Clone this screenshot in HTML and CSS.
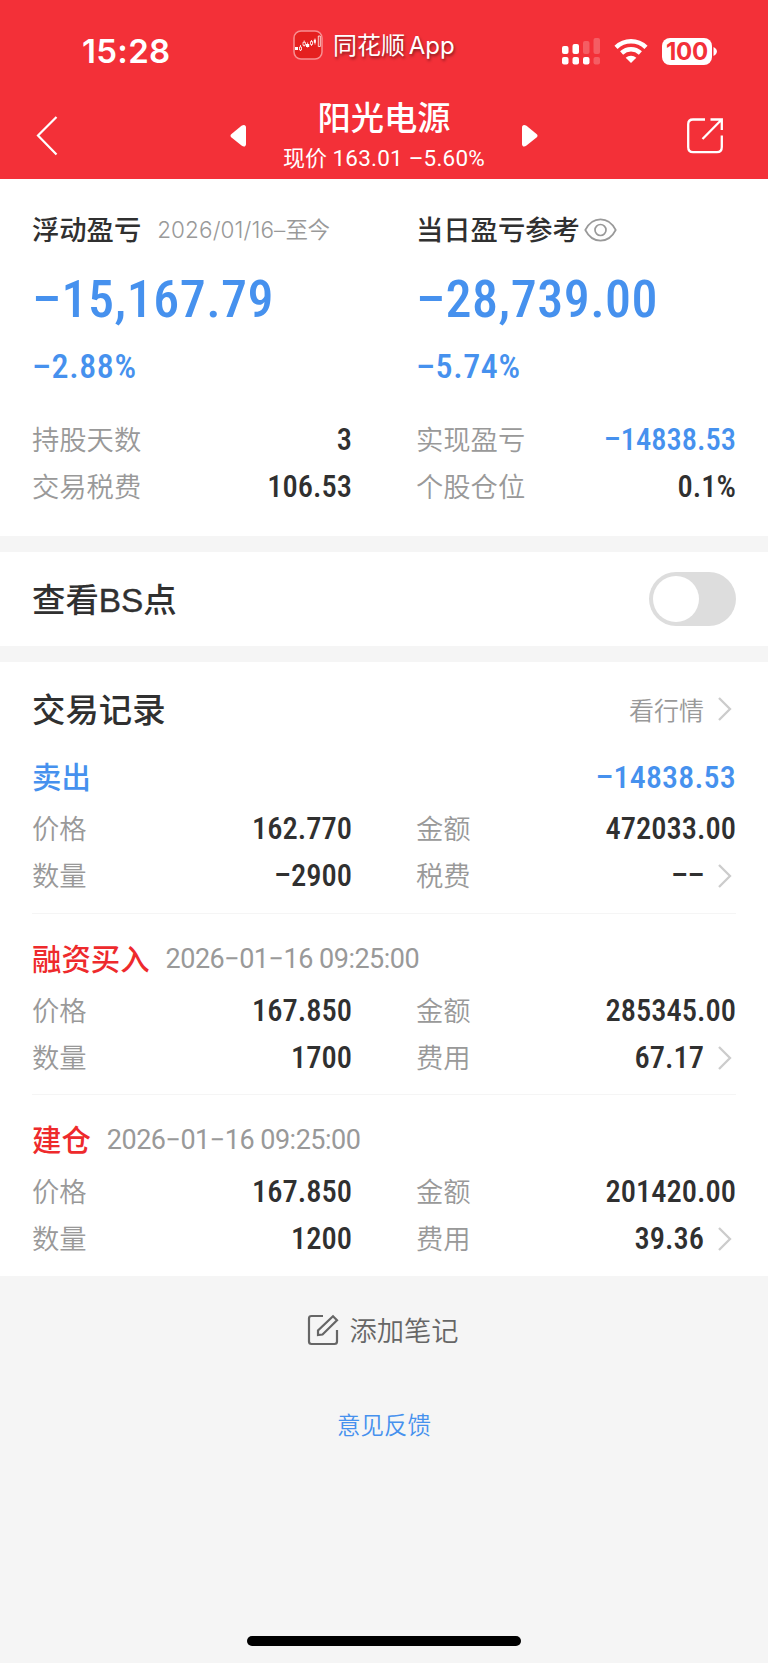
FILE: index.html
```
<!DOCTYPE html>
<html lang="zh-CN">
<head>
	<meta charset="utf-8">
	<title>阳光电源</title>
	<link rel="stylesheet" href="styles.css">
</head>
<body>
	<header class="header">
		<div class="status">
			<div class="time">15:28</div>
			<div class="app">
				<svg class="logo" width="30" height="30" viewBox="0 0 30 30">
					<rect x="1" y="1" width="28" height="28" rx="7" fill="#e5201f" stroke="#f88f91" stroke-width="1.5"/>
					<path d="M2 18.500h3M13 15.500h3.200M20.800 11.200h2" stroke="#fff" stroke-width="3"/>
					<path d="M7.500 15v6M11.200 10.500v6M18.500 10v6M22 8.500v6M14.600 12.500v5" stroke="#fff" stroke-width=".8"/>
					<path d="M6.500 17h2v3h-2zM10 12.300h2.400v3h-2.400zM17.500 11.500h2v3h-2zM25.300 6h2v10.500h-2z" fill="#e5201f" stroke="#fff" stroke-width=".8"/>
				</svg>
				<span>同花顺 App</span>
			</div>
			<div class="signals">
				<svg width="40" height="28" viewBox="0 0 40 28" fill="#fff">
					<rect x="0" y="9" width="6.500" height="8" rx="2"/>
					<rect x="10.500" y="7" width="6.500" height="10" rx="2"/>
					<rect x="21" y="4" width="6.500" height="13" rx="2" opacity=".22"/>
					<rect x="31.500" y="1" width="6.500" height="16" rx="2" opacity=".22"/>
					<rect x="0" y="20" width="6.500" height="7.500" rx="2"/>
					<rect x="10.500" y="20" width="6.500" height="7.500" rx="2"/>
					<rect x="21" y="20" width="6.500" height="7.500" rx="2"/>
					<rect x="31.500" y="20" width="6.500" height="7.500" rx="2" opacity=".22"/>
				</svg>
				<svg class="wifi" width="34" height="26" viewBox="0 0 34 26" fill="none" stroke="#fff">
					<path d="M2 9.300C10.500 1.200 23.500 1.200 32 9.300" stroke-width="4.500"/>
					<path d="M7.600 15C13 10 21 10 26.400 15" stroke-width="4.500"/>
					<path d="M17 25l-5.300-5.300c3-2.700 7.600-2.700 10.600 0z" fill="#fff" stroke="none"/>
				</svg>
				<div class="battery">100</div>
				<svg width="4" height="9" viewBox="0 0 4 9"><path d="M.5 0C5 2 5 7 .5 9z" fill="#fff"/></svg>
			</div>
		</div>
		<nav class="nav">
			<svg class="back" width="22" height="40" viewBox="0 0 22 40"><path d="M20.500 1L2 19.500 20.500 38.500" fill="none" stroke="#fff" stroke-width="2.200"/></svg>
			<svg class="prev" width="17" height="24" viewBox="0 0 17 24"><path d="M1.500 10L11.500 1.800C14 0 16 1 16 3.500V20C16 22.500 14 23.500 11.500 21.500L1.500 13.500Q-.5 11.700 1.500 10z" fill="#fff"/></svg>
			<div class="stock">
				<div class="name">阳光电源</div>
				<div class="price">现价 <span>163.01 –5.60%</span></div>
			</div>
			<svg class="next" width="17" height="24" viewBox="0 0 17 24"><path d="M15.500 10L5.500 1.800C3 0 1 1 1 3.500V20C1 22.500 3 23.500 5.500 21.500L15.500 13.500Q17.500 11.700 15.500 10z" fill="#fff"/></svg>
			<svg class="share" width="38" height="38" viewBox="0 0 38 38" fill="none" stroke="#fff" stroke-width="2.300">
				<path d="M19 2.500H7Q2.200 2.500 2.200 7.300V30Q2.200 35.200 7 35.200H31Q35.800 35.200 35.800 30V18.500"/>
				<path d="M24.500 2.500H35.800V13M35 3.200L16.500 22"/>
			</svg>
		</nav>
	</header>

	<section class="summary">
		<div class="col">
			<div class="title">浮动盈亏<span class="range">2026/01/16–<b>至今</b></span></div>
			<div class="big">–15,167.79</div>
			<div class="pct">–2.88%</div>
			<div class="row"><span class="label">持股天数</span><span class="num">3</span></div>
			<div class="row"><span class="label">交易税费</span><span class="num">106.53</span></div>
		</div>
		<div class="col">
			<div class="title">当日盈亏参考
				<svg class="eye" width="33" height="24" viewBox="0 0 33 24" fill="none" stroke="#999" stroke-width="1.700">
					<path d="M1.300 12C8.500-2.200 24.500-2.200 31.700 12C24.500 26.200 8.500 26.200 1.300 12z"/>
					<circle cx="16.500" cy="12" r="5.500"/>
				</svg>
			</div>
			<div class="big">–28,739.00</div>
			<div class="pct">–5.74%</div>
			<div class="row"><span class="label">实现盈亏</span><span class="num blue">–14838.53</span></div>
			<div class="row"><span class="label">个股仓位</span><span class="num">0.1%</span></div>
		</div>
	</section>

	<section class="bs">
		<span class="heading">查看<span class="latin">BS</span>点</span>
		<div class="switch"></div>
	</section>

	<section class="records">
		<div class="recordsTop">
			<span class="heading">交易记录</span>
			<a class="more">看行情<svg class="arrow" width="15" height="26" viewBox="0 0 15 26"><path d="M2 2L13 13 2 24"/></svg></a>
		</div>

		<div class="record">
			<div class="head blue"><span class="kind">卖出</span><span class="profit">–14838.53</span></div>
			<div class="grid">
				<div class="row"><span class="label">价格</span><span class="num">162.770</span></div>
				<div class="row"><span class="label">金额</span><span class="num">472033.00</span></div>
				<div class="row"><span class="label">数量</span><span class="num">–2900</span></div>
				<div class="row"><span class="label">税费</span><span class="num dashes">––</span><svg class="arrow" width="15" height="26" viewBox="0 0 15 26"><path d="M2 2L13 13 2 24"/></svg></div>
			</div>
		</div>

		<div class="record">
			<div class="head red"><span class="kind">融资买入</span><span class="date">2026−01−16 09:25:00</span></div>
			<div class="grid">
				<div class="row"><span class="label">价格</span><span class="num">167.850</span></div>
				<div class="row"><span class="label">金额</span><span class="num">285345.00</span></div>
				<div class="row"><span class="label">数量</span><span class="num">1700</span></div>
				<div class="row"><span class="label">费用</span><span class="num">67.17</span><svg class="arrow" width="15" height="26" viewBox="0 0 15 26"><path d="M2 2L13 13 2 24"/></svg></div>
			</div>
		</div>

		<div class="record">
			<div class="head red"><span class="kind">建仓</span><span class="date">2026−01−16 09:25:00</span></div>
			<div class="grid">
				<div class="row"><span class="label">价格</span><span class="num">167.850</span></div>
				<div class="row"><span class="label">金额</span><span class="num">201420.00</span></div>
				<div class="row"><span class="label">数量</span><span class="num">1200</span></div>
				<div class="row"><span class="label">费用</span><span class="num">39.36</span><svg class="arrow" width="15" height="26" viewBox="0 0 15 26"><path d="M2 2L13 13 2 24"/></svg></div>
			</div>
		</div>
	</section>

	<footer class="footer">
		<div class="note">
			<svg width="32" height="32" viewBox="0 0 32 32" fill="none" stroke="#666" stroke-width="2.200">
				<path d="M16 2H4.500Q2 2 2 4.500V27.500Q2 30 4.500 30H27.500Q30 30 30 27.500V16"/>
				<path d="M11 21V16.500L26 2.200 30 6.200 15.500 20.500z"/>
			</svg>
			<span>添加笔记</span>
		</div>
		<a class="feedback">意见反馈</a>
		<div class="home"></div>
	</footer>
</body>
</html>
```
FILE: styles.css
```
* {
	box-sizing: border-box;
}

body {
	margin: 0;
	width: 768px;
	height: 1663px;
	display: flex;
	flex-direction: column;
	background: #f5f5f5;
	color: #303030;
	font-family: Roboto, "Noto Sans CJK SC", sans-serif;
	white-space: nowrap;
}

svg {
	display: block;
	flex: none;
}

section {
	background: #fff;
	padding: 0 32px;
}

.blue {
	color: #4691ee;
}

.red {
	color: #ee2a2c;
}

/* header */

.header {
	height: 179px;
	background: #f33038;
	color: #fff;
}

.status {
	height: 89px;
	display: flex;
}

.time {
	width: 293px;
	padding: 31px 0 0 82px;
	font: 600 33px/40px Inter, sans-serif;
	letter-spacing: .3px;
}

.app {
	display: flex;
	width: 269px;
	height: 30px;
	margin-top: 30px;
	align-items: center;
	font-family: Inter, "Noto Sans CJK SC", sans-serif;
	font-size: 24px;
	text-shadow: 1px 2px 3px rgba(0, 0, 0, .45);
}

.app span {
	padding-bottom: 4px;
	word-spacing: -3px;
}

.logo {
	margin-right: 10px;
}

.signals {
	display: flex;
	height: 28px;
	margin-top: 37px;
	align-items: center;
}

.wifi {
	margin: 0 14px 0 12px;
}

.battery {
	width: 50px;
	height: 27px;
	border-radius: 8px;
	background: #fff;
	color: #f33038;
	font: 700 24px/28px Inter, sans-serif;
	letter-spacing: -.2px;
	text-align: center;
	margin-right: 1px;
}

.nav {
	height: 90px;
	display: flex;
	align-items: flex-start;
}

.back {
	margin: 27px 0 0 36px;
}

.prev {
	margin: 35px 0 0 172px;
}

.stock {
	width: 274px;
	text-align: center;
}

.name {
	margin-top: 6px;
	font-size: 33.300px;
	font-weight: 500;
	line-height: 48px;
}

.price {
	font-size: 22px;
	font-weight: 400;
	line-height: 30px;
}

.price span {
	font-size: 22.500px;
	font-weight: 450;
	font-stretch: 95%;
	letter-spacing: .2px;
}

.next {
	margin-top: 35px;
}

.share {
	margin: 28px 0 0 148px;
}

/* summary */

.summary {
	height: 357px;
	display: grid;
	grid-template-columns: 320px 320px;
	column-gap: 64px;
	padding-top: 28px;
}

.title {
	height: 42px;
	display: flex;
	align-items: center;
	margin-bottom: 2px;
	font-size: 27.300px;
	font-weight: 500;
}

.range {
	margin-left: 16px;
	color: #999;
	font: 300 22.500px Inter, "Noto Sans CJK SC", sans-serif;
	letter-spacing: .1px;
}

.range b {
	font-weight: 350;
	letter-spacing: -.5px;
}

.eye {
	margin: 4px 0 0 4px;
}

.big,
.pct,
.num,
.profit {
	font-stretch: 87%;
	font-weight: 460;
}

.big {
	height: 96px;
	color: #4691ee;
	font-size: 52px;
	line-height: 98px;
	letter-spacing: .5px;
}

.pct {
	height: 38px;
	margin-bottom: 31px;
	color: #4691ee;
	font-size: 34px;
	line-height: 38px;
	letter-spacing: .6px;
}

.row {
	height: 47px;
	display: flex;
	align-items: center;
}

.label {
	padding-bottom: 3px;
	color: #999;
	font-size: 27.300px;
	font-weight: 350;
}

.num {
	margin-left: auto;
	font-size: 30.500px;
}

.dashes {
	letter-spacing: -.5px;
}

/* BS switch */

.bs {
	height: 94px;
	margin: 16px 0;
	display: flex;
	align-items: center;
	justify-content: space-between;
}

.heading {
	padding-bottom: 4px;
	font-size: 33.400px;
	font-weight: 500;
}

.latin {
	font-family: "Liberation Sans", sans-serif;
	font-weight: 400;
	-webkit-text-stroke: .4px #303030;
}

.switch {
	width: 87px;
	height: 54px;
	padding: 4px;
	border-radius: 27px;
	background: #ddd;
}

.switch::before {
	content: "";
	display: block;
	width: 46px;
	height: 46px;
	border-radius: 50%;
	background: #fff;
}

/* trade records */

.records {
	height: 614px;
}

.recordsTop {
	height: 71px;
	padding-top: 23px;
	display: flex;
	align-items: center;
	justify-content: space-between;
}

.more {
	display: flex;
	align-items: center;
	color: #999;
	font-size: 25px;
	font-weight: 350;
}

.arrow {
	margin: 0 4px 0 13px;
	fill: none;
	stroke: #ccc;
	stroke-width: 2.300;
}

.record {
	height: 180px;
	padding-top: 19px;
}

.record + .record {
	height: 181px;
	padding-top: 20px;
	border-top: 1px solid #f5f5f5;
}

.head {
	height: 50px;
	margin-bottom: 3px;
	display: flex;
	align-items: center;
}

.kind {
	padding-bottom: 4px;
	font-size: 29.400px;
	font-weight: 500;
}

.profit {
	margin-left: auto;
	font-size: 32px;
	letter-spacing: .2px;
}

.date {
	margin-left: 16px;
	color: #999;
	font-size: 27px;
	letter-spacing: -.5px;
}

.grid {
	display: grid;
	grid-template-columns: 320px 320px;
	column-gap: 64px;
}

/* footer */

.footer {
	flex: 1;
	display: flex;
	flex-direction: column;
	align-items: center;
}

.note {
	height: 40px;
	margin: 34px 2px 0 0;
	display: flex;
	align-items: center;
	gap: 10px;
	color: #666;
	font-size: 27.300px;
	font-weight: 350;
}

.note span {
	padding-bottom: 2px;
}

.feedback {
	margin-top: 56px;
	color: #4691ee;
	font-size: 23.500px;
	font-weight: 350;
	line-height: 40px;
}

.home {
	width: 274px;
	height: 10px;
	margin: auto 0 17px;
	border-radius: 5px;
	background: #000;
}
```
